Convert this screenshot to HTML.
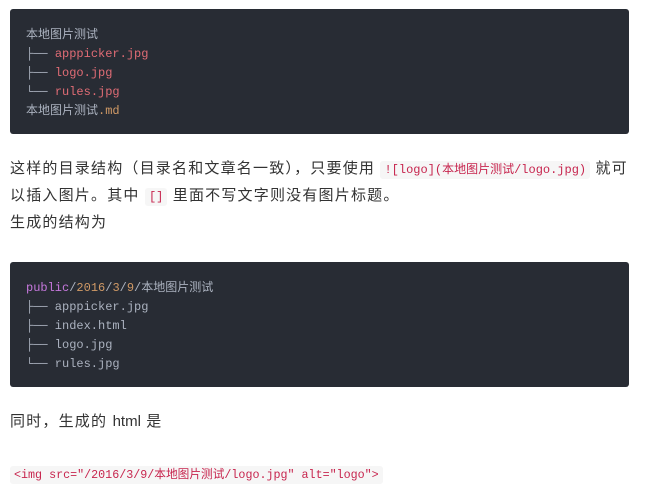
<!DOCTYPE html>
<html><head><meta charset="utf-8"><style>
body{margin:0;background:#fff;font-family:"Liberation Sans","Noto Sans CJK SC",sans-serif;color:#333;}
pre{position:absolute;left:10px;width:619px;margin:0;background:#282c34;border-radius:3px;box-sizing:border-box;padding:17px 16px;font:12px/19px "Liberation Mono","Noto Sans CJK SC",monospace;color:#abb2bf;}
.r{color:#e06c75}.o{color:#d19a66}.p{color:#c678dd}
p{position:absolute;left:10px;margin:0;font-size:15px;line-height:27px;width:640px;white-space:nowrap;letter-spacing:1.2px}
.h{letter-spacing:0}
code{font:12px "Liberation Mono","Noto Sans CJK SC",monospace;letter-spacing:0;color:#c7254e;background:#f6f6f6;padding:2px 4px;border-radius:3px}
code.f{font-size:11.7px}
</style></head><body>
<pre style="top:9px;height:125px">本地图片测试
├── <span class="r">apppicker.jpg</span>
├── <span class="r">logo.jpg</span>
└── <span class="r">rules.jpg</span>
本地图片测试<span class="o">.md</span></pre>
<p style="top:155px">这样的目录结构（目录名和文章名一致），只要使用 <code>![logo](本地图片测试/logo.jpg)</code> 就可<br>以插入图片。其中 <code>[]</code> 里面不写文字则没有图片标题。<br>生成的结构为</p>
<pre style="top:262px;height:125px"><span class="p">public</span>/<span class="o">2016</span>/<span class="o">3</span>/<span class="o">9</span>/本地图片测试
├── apppicker.jpg
├── index.html
├── logo.jpg
└── rules.jpg</pre>
<p style="top:408px">同时，生成的 <span class="h">html</span> 是</p>
<p style="top:460px"><code class="f">&lt;img src="/2016/3/9/本地图片测试/logo.jpg" alt="logo"&gt;</code></p>
</body></html>
